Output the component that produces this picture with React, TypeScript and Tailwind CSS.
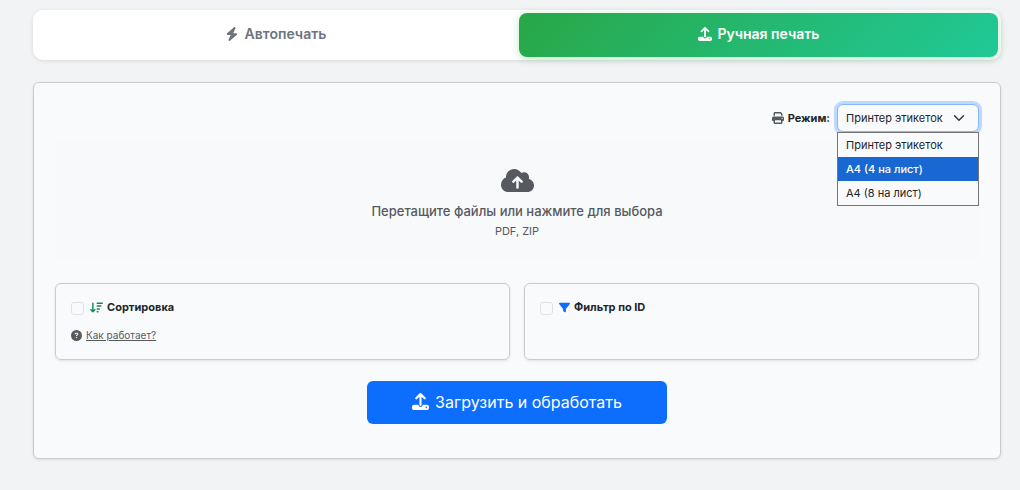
import { useState } from "react";
import {
  FaArrowDownWideShort,
  FaBolt,
  FaCircleQuestion,
  FaCloudArrowUp,
  FaFilter,
  FaPrint,
  FaUpload,
} from "react-icons/fa6";

const modes = [
  { value: "label", title: "Принтер этикеток" },
  { value: "a4x4", title: "A4 (4 на лист)" },
  { value: "a4x8", title: "A4 (8 на лист)" },
];

const ModeSelect: React.FC = () => {
  const [mode, setMode] = useState("label");
  const [open, setOpen] = useState(true);
  const [active, setActive] = useState("a4x4");

  const choose = (value: string) => {
    setMode(value);
    setOpen(false);
  };

  return (
    <div className="flex items-center justify-end gap-[7px]">
      <label
        htmlFor="print-mode"
        className="flex items-center gap-1 text-[11px] font-bold text-[#212529]"
      >
        <FaPrint className="size-3 text-[#565a5f]" />
        Режим:
      </label>
      <div className="relative">
        <select
          id="print-mode"
          value={mode}
          onChange={(e) => choose(e.target.value)}
          onMouseDown={(e) => {
            e.preventDefault();
            setOpen(!open);
          }}
          className="block h-7 w-[142px] appearance-none rounded-md border border-[#86b7fe] bg-[#f9fafc] pl-2 pr-7 text-[11px] text-[#212529] outline-none ring-[3px] ring-[#bfd8fd]"
        >
          {modes.map((m) => (
            <option key={m.value} value={m.value}>
              {m.title}
            </option>
          ))}
        </select>
        <svg
          viewBox="0 0 16 16"
          className="pointer-events-none absolute right-[14px] top-2 size-3"
          fill="none"
          stroke="#343a40"
          strokeWidth="2"
          strokeLinecap="round"
          strokeLinejoin="round"
        >
          <path d="m2 5 6 6 6-6" />
        </svg>
        {open && (
          <ul
            role="listbox"
            aria-label="Режим"
            className="absolute inset-x-0 top-full z-10 border border-[#767676] bg-[#f9fafc] text-[11px] text-[#212529]"
          >
            {modes.map((m) => (
              <li
                key={m.value}
                role="option"
                aria-selected={m.value === mode}
                onMouseEnter={() => setActive(m.value)}
                onClick={() => choose(m.value)}
                className={
                  m.value === active
                    ? "h-6 bg-[#1967d2] px-2 leading-6 font-medium text-white"
                    : "h-6 px-2 leading-6"
                }
              >
                {m.title}
              </li>
            ))}
          </ul>
        )}
      </div>
    </div>
  );
};

const App: React.FC = () => {
  const [sorting, setSorting] = useState(false);
  const [filter, setFilter] = useState(false);

  const card =
    "min-h-[77px] rounded-md border border-[#c9cbcf] px-[15px] py-[15px] shadow-[0_1px_3px_rgba(0,0,0,0.1)]";
  const cardTitle =
    "flex items-center text-[11px] leading-4 font-bold text-[#212529]";
  const checkbox =
    "mt-0.5 size-[13px] appearance-none rounded-[3px] border border-[#dee2e6] bg-[#f9fafc] checked:border-[#0d6efd] checked:bg-[#0d6efd]";

  return (
    <main className="min-h-screen bg-[#f2f3f5] pt-[10px] pr-[19px] pb-[30px] pl-[33px] font-[Inter,'Liberation_Sans',sans-serif]">
      <nav className="mb-[22px] grid grid-cols-2 gap-1 rounded-[10px] bg-white p-[3px] shadow-[0_1px_4px_rgba(0,0,0,0.1)]">
        <button
          type="button"
          className="flex h-11 items-center justify-center gap-1.5 rounded-lg pb-0.5 text-sm font-semibold text-[#6c757d]"
        >
          <FaBolt className="size-[14px]" />
          Автопечать
        </button>
        <button
          type="button"
          className="flex h-11 items-center justify-center gap-1.5 rounded-lg bg-linear-135 from-[#28a745] to-[#20c997] pb-0.5 text-sm font-semibold text-white shadow-[0_2px_8px_rgba(40,167,69,0.3)]"
        >
          <FaUpload className="size-[14px]" />
          Ручная печать
        </button>
      </nav>

      <form
        onSubmit={(e) => e.preventDefault()}
        className="rounded-md border border-[#c9cbcf] bg-[#f9fafc] px-[21px] pt-[21px] pb-[34px] shadow-[0_1px_3px_rgba(0,0,0,0.1)]"
      >
        <ModeSelect />

        <label className="mt-2 mb-[22px] flex h-[121px] cursor-pointer flex-col items-center rounded-lg bg-[#f8f9fb] pt-6 text-[#565a5f]">
          <input type="file" multiple accept=".pdf,.zip" className="sr-only" />
          <FaCloudArrowUp className="size-[33px]" />
          <span className="mt-1 text-[13px] leading-5 font-medium">
            Перетащите файлы или нажмите для выбора
          </span>
          <span className="text-[11px] leading-5">PDF, ZIP</span>
        </label>

        <div className="grid grid-cols-2 gap-[14px]">
          <section className={card}>
            <label className={cardTitle}>
              <input
                type="checkbox"
                checked={sorting}
                onChange={(e) => setSorting(e.target.checked)}
                className={checkbox}
              />
              <FaArrowDownWideShort className="mr-1 ml-1.5 size-[13px] text-[#198754]" />
              Сортировка
            </label>
            <div className="mt-3 flex items-center gap-1 text-[10px] leading-4 text-[#565a5f]">
              <FaCircleQuestion className="size-[11px]" />
              <a href="#sorting-help" className="underline">
                Как работает?
              </a>
            </div>
          </section>
          <section className={card}>
            <label className={cardTitle}>
              <input
                type="checkbox"
                checked={filter}
                onChange={(e) => setFilter(e.target.checked)}
                className={checkbox}
              />
              <FaFilter className="mr-1 ml-1.5 size-[11px] text-[#0d6efd]" />
              Фильтр по ID
            </label>
          </section>
        </div>

        <button
          type="submit"
          className="mx-auto mt-[21px] flex h-[43px] w-[300px] items-center justify-center gap-1.5 rounded-md bg-[#0d6efd] pb-0.5 text-base text-white"
        >
          <FaUpload className="size-[17px]" />
          Загрузить и обработать
        </button>
      </form>
    </main>
  );
};

export default App;
